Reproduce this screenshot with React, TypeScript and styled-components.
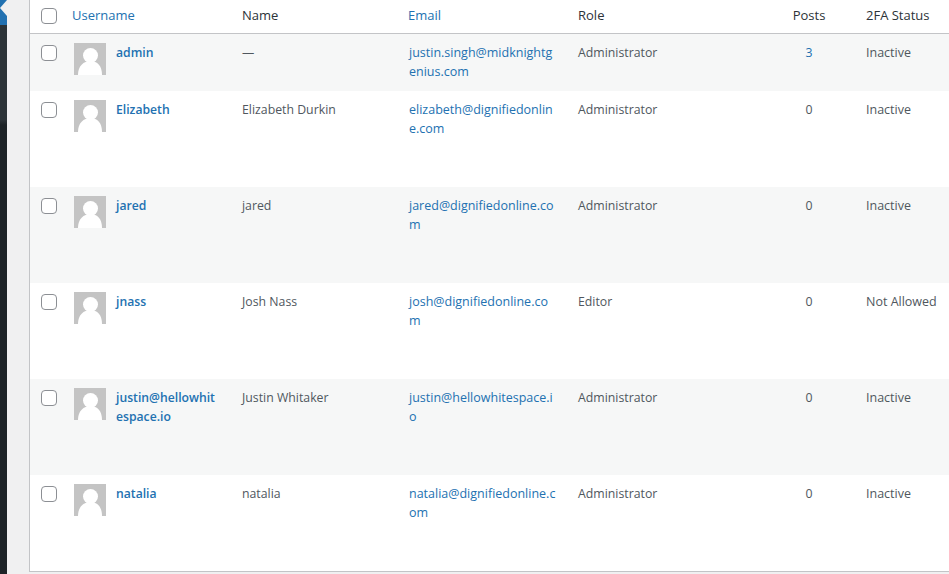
import React from "react";
import styled, { createGlobalStyle } from "styled-components";

const Global = createGlobalStyle`
  html, body { margin: 0; padding: 0; background: #f0f0f1; overflow: hidden; }
  body { font-family: "Open Sans", "Noto Sans", sans-serif; font-size: 12.3px; color: #50575e; }
`;

const Page = styled.div`
  display: flex;
  width: 949px;
  height: 574px;
  overflow: hidden;
`;

const Sidebar = styled.aside`
  position: relative;
  flex: 0 0 7px;
  height: 574px;
  background: linear-gradient(#2c3338 0, #2c3338 120px, #1d2327 125px);
`;

const ActiveItem = styled.div`
  height: 25px;
  background: #2271b1;
  svg { display: block; }
`;

const Gutter = styled.div`
  flex: 0 0 22px;
  background: #f0f0f1;
`;

const Panel = styled.main`
  flex: 1;
  height: 572px;
  background: #fff;
  border-left: 1px solid #c3c4c7;
  border-bottom: 1px solid #c3c4c7;
  box-sizing: border-box;
`;

const Table = styled.table`
  table-layout: fixed;
  width: 919px;
  border-collapse: separate;
  border-spacing: 0;
  line-height: 19px;
`;

const HeadRow = styled.tr`
  height: 34px;
`;

const Th = styled.th<{ $link?: boolean; $center?: boolean; $tight?: boolean }>`
  padding: 0 ${(p) => (p.$tight ? "11px" : "10px")} 2px ${(p) => (p.$tight ? "9px" : "10px")};
  height: 34px;
  box-sizing: border-box;
  border-bottom: 1px solid #c3c4c7;
  font-weight: 400;
  font-size: 13px;
  text-align: ${(p) => (p.$center ? "center" : "left")};
  color: ${(p) => (p.$link ? "#2271b1" : "#2c3338")};
`;

const Row = styled.tr<{ $alt: boolean; $short: boolean }>`
  height: ${(p) => (p.$short ? 57 : 96)}px;
  background: ${(p) => (p.$alt ? "#f6f7f7" : "#fff")};
`;

const Td = styled.td<{ $center?: boolean }>`
  padding: 9px 10px 0;
  vertical-align: top;
  text-align: ${(p) => (p.$center ? "center" : "left")};
`;

const CheckCell = styled.td`
  padding: 11px 0 0 11px;
  vertical-align: top;
`;

const HeadCheckCell = styled.th`
  padding: 0 0 2px 11px;
  height: 34px;
  box-sizing: border-box;
  border-bottom: 1px solid #c3c4c7;
  text-align: left;
`;

const Check = styled.span`
  display: block;
  width: 16px;
  height: 16px;
  box-sizing: border-box;
  border: 1px solid #8c8f94;
  border-radius: 4px;
  background: #fff;
`;

const UserCell = styled.div`
  display: flex;
  gap: 10px;
  padding-left: 2px;
`;

const Avatar = styled.svg`
  flex: 0 0 32px;
  width: 32px;
  height: 32px;
  display: block;
`;

const UserName = styled.a`
  color: #2271b1;
  font-weight: 600;
  font-size: 12.2px;
`;

const Link = styled.a`
  color: #2271b1;
`;

const EmailLink = styled(Link)`
  font-size: 12.5px;
`;

const StatusText = styled.span`
  font-size: 12.5px;
`;

const users = [
  { user: ["admin"], name: "—", email: ["justin.singh@midknightg", "enius.com"], role: "Administrator", posts: "3", status: "Inactive" },
  { user: ["Elizabeth"], name: "Elizabeth Durkin", email: ["elizabeth@dignifiedonlin", "e.com"], role: "Administrator", posts: "0", status: "Inactive" },
  { user: ["jared"], name: "jared", email: ["jared@dignifiedonline.co", "m"], role: "Administrator", posts: "0", status: "Inactive" },
  { user: ["jnass"], name: "Josh Nass", email: ["josh@dignifiedonline.co", "m"], role: "Editor", posts: "0", status: "Not Allowed" },
  { user: ["justin@hellowhit", "espace.io"], name: "Justin Whitaker", email: ["justin@hellowhitespace.i", "o"], role: "Administrator", posts: "0", status: "Inactive" },
  { user: ["natalia"], name: "natalia", email: ["natalia@dignifiedonline.c", "om"], role: "Administrator", posts: "0", status: "Inactive" },
];

const Lines = ({ lines }: { lines: string[] }) => (
  <>
    {lines.map((l, i) => (
      <React.Fragment key={l}>
        {i > 0 && <br />}
        {l}
      </React.Fragment>
    ))}
  </>
);

export default function App() {
  return (
    <Page>
      <Global />
      <Sidebar>
        <ActiveItem>
          <svg width="7" height="17" viewBox="0 0 7 17">
            <path d="M7 0V16L0 8Z" fill="#f0f0f1" />
          </svg>
        </ActiveItem>
      </Sidebar>
      <Gutter />
      <Panel>
        <Table>
          <colgroup>
            <col style={{ width: 32 }} />
            <col style={{ width: 170 }} />
            <col style={{ width: 167 }} />
            <col style={{ width: 169 }} />
            <col style={{ width: 194 }} />
            <col style={{ width: 94 }} />
            <col style={{ width: 93 }} />
          </colgroup>
          <thead>
            <HeadRow>
              <HeadCheckCell><Check /></HeadCheckCell>
              <Th $link>Username</Th>
              <Th>Name</Th>
              <Th $link $tight>Email</Th>
              <Th>Role</Th>
              <Th $center>Posts</Th>
              <Th>2FA Status</Th>
            </HeadRow>
          </thead>
          <tbody>
            {users.map((u, i) => (
              <Row key={u.name} $alt={i % 2 === 0} $short={i === 0}>
                <CheckCell><Check /></CheckCell>
                <Td>
                  <UserCell>
                    <Avatar viewBox="0 0 32 32">
                      <rect width="32" height="32" fill="#c4c4c4" />
                      <circle cx="16.5" cy="12.5" r="7.5" fill="#fff" />
                      <path d="M4 32c0-9 5.5-14 12.5-14s11.5 5 11.5 14Z" fill="#fff" />
                    </Avatar>
                    <UserName><Lines lines={u.user} /></UserName>
                  </UserCell>
                </Td>
                <Td>{u.name}</Td>
                <Td><EmailLink><Lines lines={u.email} /></EmailLink></Td>
                <Td>{u.role}</Td>
                <Td $center>{i === 0 ? <Link>{u.posts}</Link> : u.posts}</Td>
                <Td><StatusText>{u.status}</StatusText></Td>
              </Row>
            ))}
          </tbody>
        </Table>
      </Panel>
    </Page>
  );
}
